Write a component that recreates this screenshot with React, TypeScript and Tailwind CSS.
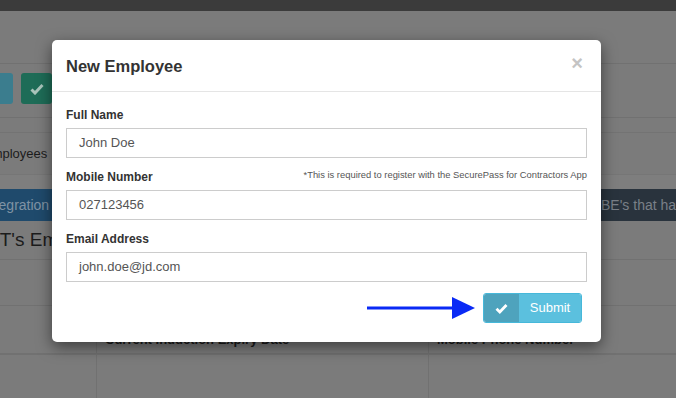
import React from "react";

const font = { fontFamily: '"Liberation Sans", Arial, sans-serif' };

export default function App() {
  return (
    <div className="relative w-[676px] h-[398px] overflow-hidden bg-[#7b7b7b]" style={font}>
      {/* background page (dimmed) */}
      <div className="h-[11px] bg-[#3b3b3b]" />
      <div className="h-[53px] border-b border-[#717171]" />
      <div className="h-[54px] flex items-start pt-[9px] gap-[8px] border-b border-[#717171]">
        <div className="ml-[-27px] w-[40px] h-[31px] rounded-[3px] bg-[#3b7d8e]" />
        <div className="w-[31px] h-[31px] rounded-[3px] bg-[#1e6c57] flex items-center justify-center">
          <svg width="14" height="12" viewBox="0 0 14 12">
            <path d="M1.5 6.5 L5 10 L12.5 2" stroke="#a9c4bb" strokeWidth="3" fill="none" />
          </svg>
        </div>
      </div>
      <div className="h-[15px] border-b border-[#737373]" />
      <div className="h-[41px] flex items-center">
        <span className="ml-[-17px] text-[13px] text-[#1c1c1c] whitespace-nowrap">Employees</span>
      </div>
      <div className="h-[15px] border-t border-[#767676] bg-[#7e7e7e]" />
      <div className="h-[32px] flex">
        <div className="w-[300px] bg-[#1f4a6c] flex items-center">
          <span className="ml-[-17px] text-[14px] text-[#7f93a4] whitespace-nowrap">Integration</span>
        </div>
        <div className="flex-1 bg-[#29333d] flex items-center overflow-hidden">
          <span className="ml-[301px] text-[14px] text-[#7a8088] whitespace-nowrap">BE's that have completed</span>
        </div>
      </div>
      <div className="h-[39px] flex items-center border-b border-[#717171]">
        <span className="ml-[-14px] text-[19px] text-[#1c1c1c] whitespace-nowrap">HT's Employees</span>
      </div>
      <div className="h-[46px] border-b border-[#717171]" />
      <div className="h-[49px] border-b-2 border-[#717171] flex">
        <div className="w-[97px] border-r border-[#717171]" />
        <div className="w-[332px] border-r border-[#717171] flex items-end pb-[4px] pl-[8px]">
          <span className="text-[13px] font-bold text-[#1c1c1c]">Current Induction Expiry Date</span>
        </div>
        <div className="flex-1 flex items-end pb-[4px] pl-[8px]">
          <span className="text-[13px] font-bold text-[#1c1c1c]">Mobile Phone Number</span>
        </div>
      </div>
      <div className="h-[50px] flex">
        <div className="w-[97px] border-r border-[#717171]" />
        <div className="w-[332px] border-r border-[#717171]" />
      </div>

      {/* modal */}
      <div className="absolute left-[52px] top-[40px] w-[549px] h-[302px] bg-white rounded-[5px] shadow-[0_5px_15px_rgba(0,0,0,0.5)] flex flex-col">
        <div className="h-[52px] border-b border-[#e5e5e5] flex items-center justify-between px-[14px]">
          <span className="text-[16.5px] text-[#333] font-bold leading-none mt-[1px]">New Employee</span>
          <span className="text-[20px] font-bold text-[#c4c4c4] leading-none mr-[4px] mt-[-6px]">×</span>
        </div>
        <div className="px-[14px] pt-[14px] flex flex-col">
          <label className="text-[12px] font-bold text-[#333] leading-[18px]">Full Name</label>
          <div className="mt-[4px] h-[30px] border border-[#cccccc] flex items-center pl-[12px] text-[13px] text-[#555]">John Doe</div>
          <div className="mt-[10px] flex items-center justify-between leading-[18px]">
            <label className="text-[12px] font-bold text-[#333]">Mobile Number</label>
            <span className="text-[9.4px] text-[#555] mt-[-4px]">*This is required to register with the SecurePass for Contractors App</span>
          </div>
          <div className="mt-[4px] h-[30px] border border-[#cccccc] flex items-center pl-[12px] text-[13px] text-[#555]">027123456</div>
          <label className="mt-[10px] text-[12px] font-bold text-[#333] leading-[18px]">Email Address</label>
          <div className="mt-[4px] h-[30px] border border-[#cccccc] flex items-center pl-[12px] text-[13px] text-[#555]">john.doe@jd.com</div>
          <div className="mt-[11px] flex items-center justify-end pr-[5px] gap-[8px]">
            <svg width="108" height="24" viewBox="0 0 108 24">
              <rect x="0" y="10.5" width="88" height="3" fill="#0a2af5" />
              <polygon points="85,1 108,12 85,23" fill="#0a2af5" />
            </svg>
            <div className="h-[30px] w-[99px] flex rounded-[3px] overflow-hidden border border-[#46b8da]">
              <div className="w-[35px] bg-[#4ea3bd] flex items-center justify-center">
                <svg width="13" height="11" viewBox="0 0 13 11">
                  <path d="M1.5 5.8 L4.8 9 L11.5 2" stroke="white" strokeWidth="2.8" fill="none" />
                </svg>
              </div>
              <div className="flex-1 bg-[#5bc0de] flex items-center justify-center text-[13px] text-white">Submit</div>
            </div>
          </div>
        </div>
      </div>
    </div>
  );
}
